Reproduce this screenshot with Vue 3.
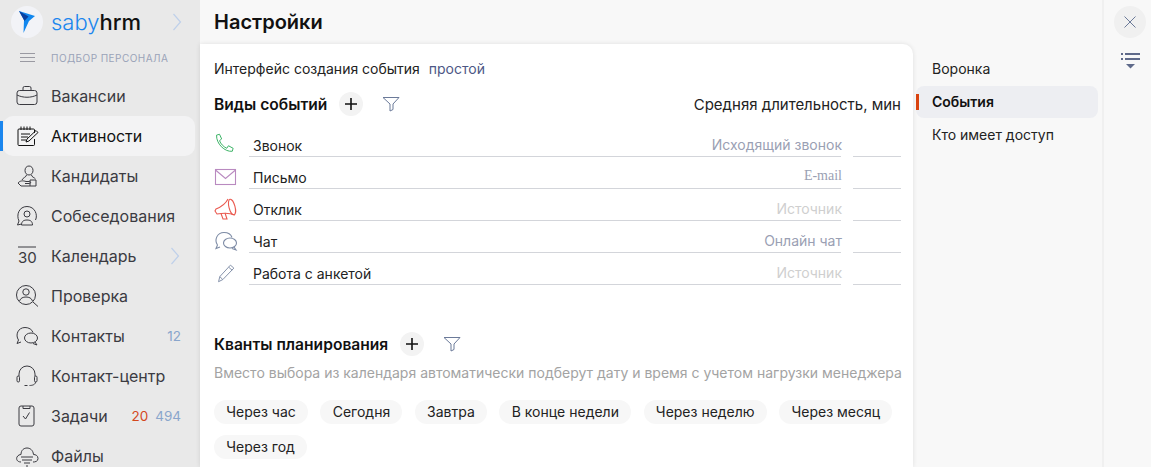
<template>
  <div class="page">
    <aside class="sidebar">
      <div class="brand">
        <div class="logo-circle">
          <svg width="32" height="32" viewBox="0 0 32 32"><path d="M8 5 L24 10 L18 15 L12.500 27 L13 14 Z" fill="#1187ee" /><path d="M8 5 L17.500 10.500 L13.500 15 Z" fill="#0a3f9e" /></svg>
        </div>
        <div class="brand-name"><span class="saby">saby</span><span class="hrm">hrm</span></div>
        <svg class="chev" width="10" height="18" viewBox="0 0 10 18"><path d="M1.500 1 L8.500 9 L1.500 17" /></svg>
      </div>
      <div class="section">
        <svg width="16" height="10" viewBox="0 0 16 10"><path d="M0 .5H15M0 4.500H15M0 8.500H15" stroke="#9a9aa2" fill="none" /></svg>
        <span>ПОДБОР ПЕРСОНАЛА</span>
      </div>
      <nav class="nav">
        <div v-for="item in navItems" :key="item.name" class="nav-item" :class="{ active: item.active }">
          <span class="nav-icon">
            <svg width="24" height="24" viewBox="0 0 24 24" fill="none" stroke="#3a3a40" stroke-width="1" v-html="item.icon"></svg>
          </span>
          <span class="nav-name">{{ item.name }}</span>
          <span v-if="item.red" class="count red">{{ item.red }}</span>
          <span v-if="item.count" class="count">{{ item.count }}</span>
          <svg v-if="item.arrow" class="chev nav-chev" width="10" height="18" viewBox="0 0 10 18"><path d="M1.500 1 L8.500 9 L1.500 17" /></svg>
        </div>
      </nav>
    </aside>

    <main class="main">
      <h1 class="title">Настройки</h1>
      <div class="content">
        <section class="card">
          <div class="iface">Интерфейс создания события <a class="iface-link">простой</a></div>

          <div class="head-row">
            <h2>Виды событий</h2>
            <button class="add"><svg width="12" height="12" viewBox="0 0 12 12"><path d="M6 0V12M0 6H12" stroke="#111" stroke-width="1.6" /></svg></button>
            <svg class="filter" width="18" height="16" viewBox="0 0 18 16"><path d="M1 1.500H17L11 8V13.500L8 15V8Z" fill="none" stroke="#6b7a99" /></svg>
            <span class="duration">Средняя длительность, мин</span>
          </div>

          <div class="events">
            <div v-for="ev in events" :key="ev.name" class="event">
              <span class="event-icon">
                <svg width="24" height="24" viewBox="0 0 24 24" fill="none" :stroke="ev.color" stroke-width="1.1" v-html="ev.icon"></svg>
              </span>
              <div class="event-field">
                <span>{{ ev.name }}</span>
                <span class="event-hint" :class="ev.hintClass">{{ ev.hint }}</span>
              </div>
              <div class="event-min"></div>
            </div>
          </div>

          <div class="head-row quants">
            <h2>Кванты планирования</h2>
            <button class="add"><svg width="12" height="12" viewBox="0 0 12 12"><path d="M6 0V12M0 6H12" stroke="#111" stroke-width="1.6" /></svg></button>
            <svg class="filter" width="18" height="16" viewBox="0 0 18 16"><path d="M1 1.500H17L11 8V13.500L8 15V8Z" fill="none" stroke="#6b7a99" /></svg>
          </div>
          <p class="note">Вместо выбора из календаря автоматически подберут дату и время с учетом нагрузки менеджера</p>
          <div class="chips">
            <span v-for="chip in chips" :key="chip" class="chip">{{ chip }}</span>
          </div>
        </section>

        <div class="tabs">
          <div v-for="tab in tabs" :key="tab" class="tab" :class="{ selected: tab === 'События' }">{{ tab }}</div>
        </div>
      </div>
    </main>

    <aside class="strip">
      <button class="close"><svg width="12" height="12" viewBox="0 0 12 12"><path d="M.5 .5L11.500 11.500M11.500 .5L.5 11.500" stroke="#6b7a99" fill="none" /></svg></button>
      <svg width="19" height="16" viewBox="0 0 19 16"><path d="M0 1H2M4 1H19M0 6H2M4 6H19" stroke="#5f6a8a" stroke-width="2" /><path d="M5 11H14L9.500 15.500Z" fill="#5f6a8a" /></svg>
    </aside>
  </div>
</template>

<script setup>
const navItems = [
  { name: "Вакансии", icon: '<rect x="2" y="6.500" width="20" height="14" rx="2.500"/><path d="M8 6.500V4a1.500 1.500 0 0 1 1.500-1.500h5A1.500 1.500 0 0 1 16 4v2.500M2 11c6 3 14 3 20 0"/>' },
  { name: "Активности", active: true, icon: '<path d="M16 5h2.500a1 1 0 0 1 1 1v3M19.500 15v5.500a1 1 0 0 1-1 1H4a1 1 0 0 1-1-1V6a1 1 0 0 1 1-1h12" stroke="#111"/><path d="M6 2.500V6M9 2.500V6M12 2.500V6M15 2.500V6M6 10h9M6 13h7M6 16h5" stroke="#111"/><path d="M11 18l1-3 9-8.500 2 2-9 8.500z" stroke="#111"/>' },
  { name: "Кандидаты", icon: '<path d="M14 2c2.500 0 4 2 4 4.500S16.500 11 14 11s-4-2-4-4.500S11.500 2 14 2z"/><path d="M11.500 11c0 2-3.500 2.500-4.500 5M16.500 11c0 2 3 2.500 4 4"/><path d="M3 19c2-2.500 5-2.500 8-1.500h3.500c1.500 0 1.500 2 0 2H10M3 19l3 3h9v-6h6v6h-6"/>' },
  { name: "Собеседования", icon: '<path d="M4 17C1 11 4 2.500 12 2.500S23 11 20.500 16"/><circle cx="12" cy="10" r="3"/><path d="M6.500 21c0-4 2.500-5 5.500-5s5.500 1 5.500 5zM4 17l-1.500 4 4-1"/>' },
  { name: "Календарь", arrow: true, icon: '<path d="M3 3H21" /><text x="3" y="19" font-size="15" fill="#3a3a40" stroke="none" font-family="Inter, sans-serif">30</text>' },
  { name: "Проверка", icon: '<circle cx="11" cy="11" r="9.500"/><circle cx="11" cy="8" r="3.200"/><path d="M4.500 17c1-3 3.500-4 6.500-4s5.500 1 6.500 4M18 18l5 4.500"/>' },
  { name: "Контакты", count: "12", icon: '<path d="M3.500 16C0 11 3 3.500 10 3.500c4 0 7 2 8 5"/><path d="M3.500 16L2 19.500l4-1.500"/><ellipse cx="16" cy="14" rx="6.500" ry="5"/><path d="M20 18l2 3-4-1.500"/>' },
  { name: "Контакт-центр", icon: '<path d="M4 12V10a8 8 0 0 1 16 0v2"/><rect x="2" y="12" width="2.500" height="6" rx="1.250"/><rect x="19.500" y="12" width="2.500" height="6" rx="1.250"/><path d="M20.500 18c0 2.500-3 3.500-6 3.500M9.500 21.500h3"/>' },
  { name: "Задачи", red: "20", count: "494", icon: '<rect x="4" y="2" width="15" height="20" rx="2"/><path d="M8 2V4.500H15V2M8 12l2.500 3 4-6.500"/>' },
  { name: "Файлы", icon: '<path d="M6 18C2 18 1 15 2 13s3-2.500 4-2.500C6 6 9 4 12 4s6 2 6.500 6.500c2 0 4.500 1 4.500 4s-3 3.500-5 3.500"/><path d="M6 13h12M7 16h10M9 19h6M11 22h2"/>' },
];

const events = [
  { name: "Звонок", hint: "Исходящий звонок", color: "#2fae5c", icon: '<path transform="scale(.85)" d="M3 2.500L6.500 1.500 9 7 6.500 9C8 13 11 16 15 18l2-3 5.500 3-1 3.500c-9 1-19-9-18.500-19z"/>' },
  { name: "Письмо", hint: "E-mail", hintClass: "serif", color: "#b98ac0", icon: '<rect x="1.500" y="4.500" width="20" height="15"/><path d="M1.500 5L11.500 13.500 21.500 5"/>' },
  { name: "Отклик", hint: "Источник", hintClass: "faint", color: "#ea5a50", icon: '<path d="M14 2C12 6 7 10 2 12L1 14 3 17C9 16 16 16 21 18"/><ellipse cx="18" cy="10" rx="3" ry="8" transform="rotate(-15 18 10)"/><path d="M7 16.500L9 22H13L11 16"/>' },
  { name: "Чат", hint: "Онлайн чат", color: "#7d8ba5", icon: '<path d="M3.500 16C0 11 3 3.500 10 3.500c4 0 7 2 8 5"/><path d="M3.500 16L2 19.500l4-1.500"/><ellipse cx="16" cy="14" rx="6.500" ry="5"/><path d="M20 18l2 3-4-1.500"/>' },
  { name: "Работа с анкетой", hint: "Источник", hintClass: "faint", color: "#7d8ba5", icon: '<path transform="translate(2 2) scale(.85)" d="M3 22l1.500-6L17 2.500l4 3.500L8 19.500z"/><path transform="translate(2 2) scale(.85)" d="M15 5l4 3.500M4.500 16L8 19.500"/>' },
];

const chips = ["Через час", "Сегодня", "Завтра", "В конце недели", "Через неделю", "Через месяц", "Через год"];
const tabs = ["Воронка", "События", "Кто имеет доступ"];
</script>

<style scoped>
.page {
  display: flex;
  width: 1151px;
  height: 467px;
  overflow: hidden;
  font-family: Inter, "Noto Sans", sans-serif;
  font-size: 14px;
  color: #222;
}

.sidebar {
  width: 200px;
  flex: none;
  background: #e9e9e9;
}
.brand {
  display: flex;
  align-items: center;
  height: 44px;
  padding-left: 11px;
}
.logo-circle {
  width: 32px;
  height: 32px;
  border-radius: 50%;
  background: #f2f3f7;
}
.brand-name {
  margin-left: 8px;
  font-size: 22px;
  line-height: 28px;
  width: 121px;
}
.saby { color: #1b86ee; font-weight: 300; }
.hrm { color: #111; font-weight: 500; }
.chev { flex: none; }
.chev path { fill: none; stroke: #bfd0ea; stroke-width: 1.2; }
.section {
  display: flex;
  align-items: center;
  gap: 15px;
  height: 28px;
  padding-left: 20px;
  font-size: 10px;
  letter-spacing: 0.45px;
  color: #9aa3b8;
}
.nav { padding-top: 4px; }
.nav-item {
  position: relative;
  display: flex;
  align-items: center;
  height: 40px;
  margin-left: 3px;
  width: 192px;
  border-radius: 10px;
  padding-left: 12px;
  font-size: 16px;
  color: #3b3b42;
  box-sizing: border-box;
}
.nav-item.active { background: #f3f3f4; color: #111; }
.nav-item.active::before {
  content: "";
  position: absolute;
  left: -3px;
  top: 5px;
  width: 3px;
  height: 30px;
  background: #1b86ee;
}
.nav-icon { width: 36px; flex: none; display: flex; }
.nav-name { flex: 1; }
.count { color: #8aa6cc; font-size: 13.500px; margin-right: 14px; }
.count.red { color: #d4481c; margin-right: 7px; }
.nav-chev { margin-right: 15px; }

.main {
  width: 902px;
  flex: none;
  background: #f8f8f8;
}
.title {
  margin: 0;
  height: 44px;
  padding-left: 14px;
  font-size: 20px;
  font-weight: 600;
  line-height: 44px;
  color: #111;
}
.content { display: flex; }
.card {
  width: 713px;
  height: 423px;
  flex: none;
  box-sizing: border-box;
  padding: 16px 12px 0 14px;
  background: #fff;
  border-radius: 0 10px 0 0;
  box-shadow: 0 0 5px rgba(0, 0, 0, 0.1);
}
.iface { line-height: 18px; color: #222; }
.iface-link { margin-left: 5px; color: #4d5785; }
.head-row {
  display: flex;
  align-items: center;
  margin-top: 14px;
  height: 24px;
}
.head-row h2 {
  margin: 0;
  font-size: 15.600px;
  font-weight: 600;
  color: #111;
}
.add {
  display: flex;
  align-items: center;
  justify-content: center;
  width: 24px;
  height: 24px;
  margin-left: 12px;
  border: 0;
  padding: 0;
  border-radius: 50%;
  background: #f3f3f3;
}
.filter { margin-left: 19px; }
.duration { margin-left: auto; font-size: 15px; color: #222; }

.events { margin-top: 9px; }
.event {
  display: flex;
  height: 32px;
}
.event-icon { width: 35px; flex: none; padding-top: 8px; }
.event-field {
  display: flex;
  justify-content: space-between;
  align-items: center;
  width: 592px;
  height: 32px;
  box-sizing: border-box;
  padding: 10px 0 0 4px;
  border-bottom: 1px solid #d3d5da;
  color: #222;
}
.event-hint { margin: 0 -1px 2px 0; color: #9aa0b3; }
.event-hint.serif { margin-bottom: 4px; font-family: "Liberation Serif", serif; }
.event-hint.faint { color: #cfcfcf; }
.event-min {
  width: 48px;
  height: 32px;
  margin-left: 12px;
  box-sizing: border-box;
  border-bottom: 1px solid #d3d5da;
}

.quants { margin-top: 47px; }
.note {
  margin: 8px 0 0;
  line-height: 18px;
  color: #a3a3a3;
  white-space: nowrap;
}
.chips {
  display: flex;
  flex-wrap: wrap;
  gap: 11px 12.300px;
  margin-top: 18px;
}
.chip {
  height: 24px;
  padding: 0 12.300px;
  line-height: 24px;
  border-radius: 12px;
  background: #f7f7f7;
  color: #222;
}

.tabs { flex: 1; padding: 9px 4px 0 3px; }
.tab {
  position: relative;
  height: 32px;
  margin-bottom: 1px;
  line-height: 31px;
  padding-left: 16px;
  color: #222;
}
.tab.selected {
  font-weight: 600;
  color: #111;
  background: #edeef2;
  border-radius: 8px;
}
.tab.selected::before {
  content: "";
  position: absolute;
  left: 0;
  top: 8px;
  width: 3px;
  height: 16px;
  background: #d9430f;
}

.strip {
  flex: 1;
  display: flex;
  flex-direction: column;
  align-items: center;
  gap: 15px;
  padding-top: 6px;
  background: #f8f8f8;
  border-left: 2px solid #f0f0f0;
}
.close {
  display: flex;
  align-items: center;
  justify-content: center;
  width: 32px;
  height: 32px;
  margin-left: 5px;
  border: 0;
  padding: 0;
  border-radius: 50%;
  background: #f0f0f0;
}
.strip > svg { margin-left: 6px; }
</style>
